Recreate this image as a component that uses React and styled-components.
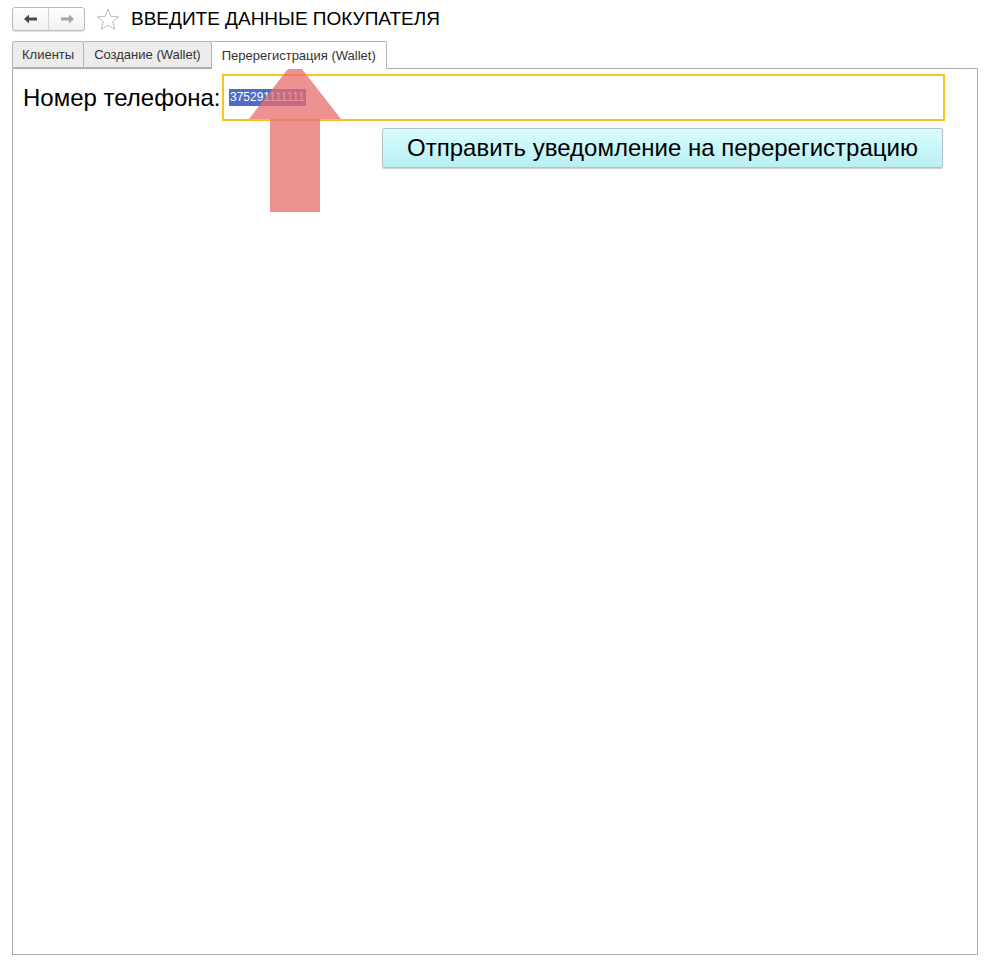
import React from 'react';
import styled, { createGlobalStyle } from 'styled-components';

const GlobalStyle = createGlobalStyle`
  html, body {
    margin: 0;
    padding: 0;
    background: #fff;
    font-family: Arial, "Liberation Sans", sans-serif;
  }
`;

const Page = styled.div`
  position: relative;
  width: 988px;
  height: 963px;
  padding: 7px 10px 8px 12px;
  box-sizing: border-box;
  display: flex;
  flex-direction: column;
`;

const Header = styled.div`
  display: flex;
  align-items: center;
  height: 24px;
`;

const NavGroup = styled.div`
  display: flex;
  height: 24px;
  border: 1px solid #b9b9b9;
  border-radius: 3px;
  box-sizing: border-box;
  background: linear-gradient(#ffffff, #f0f0f0);
  box-shadow: 0 1px 1px rgba(0, 0, 0, 0.12);
`;

const NavButton = styled.div`
  width: 35px;
  display: flex;
  align-items: center;
  justify-content: center;
  & + & {
    border-left: 1px solid #d4d4d4;
  }
`;

const StarWrap = styled.div`
  margin-left: 10px;
  width: 25px;
  height: 24px;
  display: flex;
  align-items: center;
  justify-content: center;
`;

const Title = styled.div`
  margin-left: 11px;
  font-size: 19px;
  color: #000;
`;

const TabBar = styled.div`
  display: flex;
  margin-top: 10px;
  height: 27px;
  align-items: flex-end;
`;

const Tab = styled.div`
  height: ${(p) => (p.active ? '28px' : '27px')};
  margin-bottom: ${(p) => (p.active ? '-1px' : '0')};
  box-sizing: border-box;
  padding: 0 ${(p) => p.pad}px;
  display: flex;
  align-items: center;
  font-size: 13px;
  color: #333;
  background: ${(p) => (p.active ? '#fff' : '#ececec')};
  border: 1px solid #b4b4b4;
  border-bottom: ${(p) => (p.active ? 'none' : '1px solid #b4b4b4')};
  border-radius: 2px 2px 0 0;
  position: relative;
  z-index: ${(p) => (p.active ? 1 : 0)};
  & + & {
    margin-left: -1px;
  }
`;

const Panel = styled.div`
  flex: 1;
  border: 1px solid #aaaaaa;
  background: #fff;
  padding: 5px 32px 0 10px;
  display: flex;
  flex-direction: column;
`;

const FieldRow = styled.div`
  display: flex;
  align-items: center;
  height: 47px;
`;

const Label = styled.div`
  width: 199px;
  font-size: 24px;
  color: #000;
  white-space: nowrap;
`;

const InputBox = styled.div`
  flex: 1;
  height: 47px;
  box-sizing: border-box;
  border: 2px solid #f6c522;
  display: flex;
  align-items: center;
  padding-left: 5px;
`;

const Selected = styled.span`
  background: #4e6cc8;
  color: #fff;
  font-size: 12px;
  line-height: 17px;
  padding: 0 1px;
`;

const ButtonRow = styled.div`
  display: flex;
  justify-content: flex-end;
  margin-top: 7px;
  padding-right: 2px;
`;

const SendButton = styled.div`
  width: 561px;
  height: 40px;
  box-sizing: border-box;
  border: 1px solid #b3c4c6;
  border-radius: 2px;
  background: linear-gradient(#d8fdff, #b9eff2);
  box-shadow: 0 1px 1px rgba(0, 0, 0, 0.2);
  display: flex;
  align-items: center;
  justify-content: center;
  font-size: 24px;
  color: #000;
`;

const ArrowOverlay = styled.svg`
  position: absolute;
  left: 249px;
  top: 60px;
  pointer-events: none;
`;

const ArrowLeft = () => (
  <svg width="14" height="10" viewBox="0 0 14 10">
    <path d="M0 5 L5 0.5 L5 3.5 L13 3.5 L13 6.5 L5 6.5 L5 9.5 Z" fill="#4a4a4a" />
  </svg>
);

const ArrowRight = () => (
  <svg width="14" height="10" viewBox="0 0 14 10">
    <path d="M14 5 L9 0.5 L9 3.5 L1 3.5 L1 6.5 L9 6.5 L9 9.5 Z" fill="#a6a6a6" />
  </svg>
);

const Star = () => (
  <svg width="24" height="23" viewBox="0 0 24 23">
    <path
      d="M12 1 L14.9 8.3 L22.8 8.7 L16.7 13.7 L18.8 21.4 L12 17 L5.2 21.4 L7.3 13.7 L1.2 8.7 L9.1 8.3 Z"
      fill="none"
      stroke="#b5bcc6"
      strokeWidth="1"
      strokeLinejoin="round"
    />
  </svg>
);

const tabs = [
  { label: 'Клиенты', pad: 9 },
  { label: 'Создание (Wallet)', pad: 10 },
  { label: 'Перерегистрация (Wallet)', pad: 10, active: true },
];

const App = () => (
  <Page>
    <GlobalStyle />
    <Header>
      <NavGroup>
        <NavButton><ArrowLeft /></NavButton>
        <NavButton><ArrowRight /></NavButton>
      </NavGroup>
      <StarWrap><Star /></StarWrap>
      <Title>ВВЕДИТЕ ДАННЫЕ ПОКУПАТЕЛЯ</Title>
    </Header>
    <TabBar>
      {tabs.map((t) => (
        <Tab key={t.label} active={t.active} pad={t.pad}>{t.label}</Tab>
      ))}
    </TabBar>
    <Panel>
      <FieldRow>
        <Label>Номер телефона:</Label>
        <InputBox>
          <Selected>375291111111</Selected>
        </InputBox>
      </FieldRow>
      <ButtonRow>
        <SendButton>Отправить уведомление на перерегистрацию</SendButton>
      </ButtonRow>
    </Panel>
    <ArrowOverlay width="93" height="153" viewBox="0 0 93 153">
      <path
        d="M46 0 L92 59 L71 59 L71 152 L21 152 L21 59 L0 59 Z"
        fill="rgba(232, 108, 108, 0.75)"
      />
    </ArrowOverlay>
  </Page>
);

export default App;
